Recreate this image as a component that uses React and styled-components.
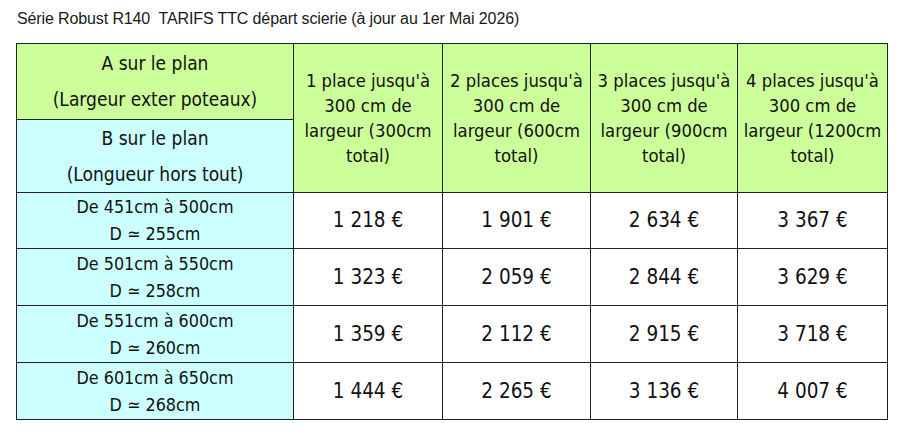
import React from "react";
import styled, { createGlobalStyle } from "styled-components";

const Global = createGlobalStyle`
  html, body { margin: 0; padding: 0; background: #ffffff; }
  body { width: 912px; height: 436px; overflow: hidden; }
`;

const Page = styled.div`
  padding: 10px 0 0 16px;
  display: flex;
  flex-direction: column;
`;

const Title = styled.div`
  font-family: "Liberation Sans", Arial, sans-serif;
  font-size: 16px;
  line-height: 18px;
  color: #1a1a1a;
  padding-left: 1px;
  height: 33px;
  letter-spacing: -0.12px;
`;

const Table = styled.table`
  border-collapse: collapse;
  table-layout: fixed;
  width: 871px;
  font-family: "DejaVu Sans Condensed", "DejaVu Sans", sans-serif;
  color: #111;
`;

const Cell = styled.td`
  border: 1px solid #222;
  padding: 0;
  text-align: center;
  vertical-align: middle;
  white-space: nowrap;
  font-size: ${(p) => p.$fs || 18}px;
  background: ${(p) => p.$bg || "#ffffff"};
  height: ${(p) => (p.$h ? `${p.$h}px` : "auto")};
`;

const Line = styled.div`
  line-height: ${(p) => p.$lh}px;
`;

const GREEN = "#ccff99";
const CYAN = "#ccffff";

const headers = [
  ["1 place jusqu'à", "300 cm de", "largeur (300cm", "total)"],
  ["2 places jusqu'à", "300 cm de", "largeur (600cm", "total)"],
  ["3 places jusqu'à", "300 cm de", "largeur (900cm", "total)"],
  ["4 places jusqu'à", "300 cm de", "largeur (1200cm", "total)"],
];

const rows = [
  ["De 451cm à 500cm", "D ≃ 255cm", ["1 218 €", "1 901 €", "2 634 €", "3 367 €"]],
  ["De 501cm à 550cm", "D ≃ 258cm", ["1 323 €", "2 059 €", "2 844 €", "3 629 €"]],
  ["De 551cm à 600cm", "D ≃ 260cm", ["1 359 €", "2 112 €", "2 915 €", "3 718 €"]],
  ["De 601cm à 650cm", "D ≃ 268cm", ["1 444 €", "2 265 €", "3 136 €", "4 007 €"]],
];

export default function App() {
  return (
    <>
      <Global />
      <Page>
        <Title>Série Robust R140&nbsp; TARIFS TTC départ scierie (à jour au 1er Mai 2026)</Title>
        <Table>
          <colgroup>
            <col style={{ width: 277 }} />
            <col style={{ width: 149 }} />
            <col style={{ width: 148 }} />
            <col style={{ width: 147 }} />
            <col style={{ width: 150 }} />
          </colgroup>
          <tbody>
            <tr>
              <Cell $bg={GREEN} $h={74.5} $fs={19}>
                <Line $lh={36}>A sur le plan</Line>
                <Line $lh={36}>(Largeur exter poteaux)</Line>
              </Cell>
              {headers.map((h, i) => (
                <Cell key={i} $bg={GREEN} rowSpan={2} $fs={18.3}>
                  {h.map((l, j) => (
                    <Line key={j} $lh={25}>{l}</Line>
                  ))}
                </Cell>
              ))}
            </tr>
            <tr>
              <Cell $bg={CYAN} $h={71} $fs={19}>
                <Line $lh={36}>B sur le plan</Line>
                <Line $lh={36}>(Longueur hors tout)</Line>
              </Cell>
            </tr>
            {rows.map((r, i) => (
              <tr key={i}>
                <Cell $bg={CYAN} $h={55.8} $fs={17.8}>
                  <Line $lh={27}>{r[0]}</Line>
                  <Line $lh={27}>{r[1]}</Line>
                </Cell>
                {r[2].map((p, j) => (
                  <Cell key={j} $fs={20.5}>{p}</Cell>
                ))}
              </tr>
            ))}
          </tbody>
        </Table>
      </Page>
    </>
  );
}
